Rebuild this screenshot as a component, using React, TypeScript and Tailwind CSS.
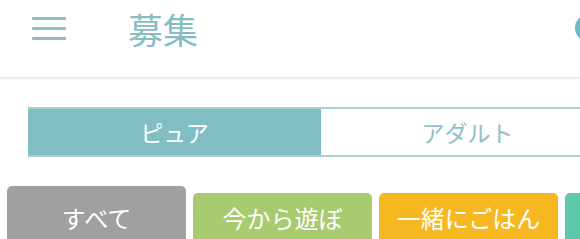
import React from "react";

export default function App() {
  const font = { fontFamily: '"Noto Sans CJK JP", "Noto Sans", sans-serif' };
  return (
    <div className="w-[580px] h-[239px] overflow-hidden bg-white relative" style={font}>
      <header className="h-[78px] border-b border-[#e6e6e6] shadow-[0_1px_3px_rgba(0,0,0,0.08)] relative">
        <div className="flex items-center h-[56px] pl-[32px]">
          <div className="flex flex-col gap-[7px] w-[34px]">
            <span className="block h-[3px] bg-[#8cbfc7] rounded-[1px]" />
            <span className="block h-[3px] bg-[#8cbfc7] rounded-[1px]" />
            <span className="block h-[3px] bg-[#8cbfc7] rounded-[1px]" />
          </div>
          <h1 className="ml-[62px] text-[35px] leading-none text-[#86bdc5] font-normal">募集</h1>
        </div>
        <div className="absolute left-[575px] top-[14px] w-[28px] h-[28px] rounded-full bg-[#6fbcc4]" />
      </header>
      <div className="mt-[29px] ml-[28px] flex w-[586px] h-[50px] border-y-[2px] border-[#a8cfd2]">
        <div className="w-[293px] shrink-0 bg-[#80bec4] flex items-center justify-center text-white text-[23px]">ピュア</div>
        <div className="w-[293px] shrink-0 bg-white flex items-center justify-center text-[#8fc1c6] text-[23px]">アダルト</div>
      </div>
      <div className="mt-[29px] ml-[7px] flex gap-[7px] items-start">
        <div className="shrink-0 whitespace-nowrap w-[179px] h-[70px] rounded-[5px] bg-[#a0a0a0] text-white text-[24px] flex justify-center pt-[20px] leading-none">すべて</div>
        <div className="shrink-0 whitespace-nowrap mt-[7px] w-[179px] h-[60px] rounded-[5px] bg-[#a8cb6f] text-white text-[24px] flex justify-center pt-[13px] leading-none">今から遊ぼ</div>
        <div className="shrink-0 whitespace-nowrap mt-[7px] w-[179px] h-[60px] rounded-[5px] bg-[#f5b821] text-white text-[24px] flex justify-center pt-[13px] leading-none">一緒にごはん</div>
        <div className="shrink-0 mt-[7px] w-[179px] h-[60px] rounded-[5px] bg-[#5ec8ab]" />
      </div>
    </div>
  );
}
